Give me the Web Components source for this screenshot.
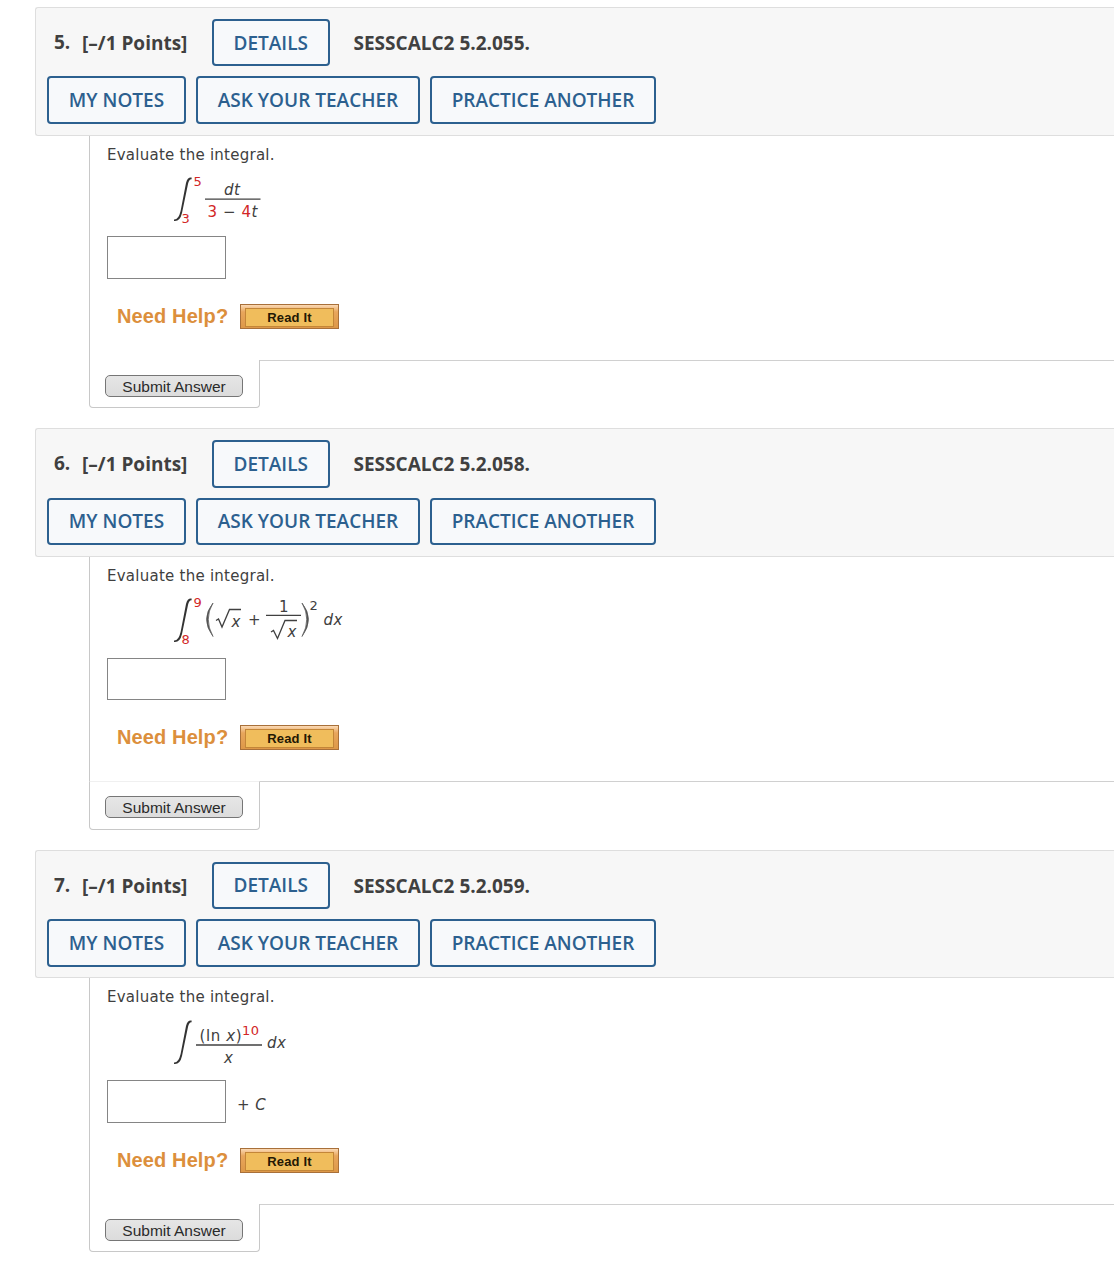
<!DOCTYPE html>
<html lang="en">
<head>
<meta charset="utf-8">
<title>Assignment</title>
<style>
    html, body {
        margin: 0;
        background: #fff;
    }
    body {
        height: 1278px;
        overflow: hidden;
        font-family: "DejaVu Sans", Verdana, sans-serif;
        color: #404040;
    }
    main {
        display: flex;
        flex-direction: column;
        padding: 7.1px 0 0 35px;
    }
    text {
        font-size: 15px;
        fill: #404040;
    }
    text.sm { font-size: 13px; }
    .i { font-style: italic; }
    .red { fill: #d22626; }
    .line {
        fill: none;
        stroke: #404040;
        stroke-width: 1.3;
    }
    svg { display: block; }
</style>
</head>
<body>
<main>
    <question-block number="5" code="SESSCALC2 5.2.055.">
        <svg slot="formula" width="200" height="56" viewBox="0 0 200 56">
            <path fill="#333" d="M26.6 7.6 Q22.5 7 21 13 L15.6 41 Q13.5 50 9 49.6 L9 51 Q15 51.8 17 43 L23 14 Q24 9 26.6 9.2Z"/>
            <text class="sm red" x="28.5" y="16">5</text>
            <text class="sm red" x="16.5" y="53">3</text>
            <text class="i" x="59" y="25" textLength="16">dt</text>
            <path class="line" d="M40 29.2H95.5"/>
            <text x="42.5" y="47" textLength="50" xml:space="preserve"><tspan class="red">3</tspan> − <tspan class="red">4</tspan><tspan class="i">t</tspan></text>
        </svg>
    </question-block>
    <question-block number="6" code="SESSCALC2 5.2.058." class="second">
        <svg slot="formula" width="200" height="56" viewBox="0 0 200 56">
            <path fill="#333" d="M26.6 7.6 Q22.5 7 21 13 L15.6 41 Q13.5 50 9 49.6 L9 51 Q15 51.8 17 43 L23 14 Q24 9 26.6 9.2Z"/>
            <text class="sm red" x="28.5" y="15.5">9</text>
            <text class="sm red" x="16.5" y="52.5">8</text>
            <path fill="#555" d="M48 12 Q35 28 48 45.5 Q38.5 28 48 12Z" stroke="#555" stroke-width=".7"/>
            <path class="line" d="M51 29.5 L53.5 28 L57 36 L64.5 18.5 H76"/>
            <text class="i" x="66.5" y="36">x</text>
            <text x="83" y="34">+</text>
            <path class="line" d="M101 24.3 H136"/>
            <text x="114" y="21">1</text>
            <path class="line" d="M106 41 L108.5 39.5 L112.5 47.5 L120 29.5 H132"/>
            <text class="i" x="122.5" y="46">x</text>
            <path fill="#555" d="M137 12 Q150 28 137 45.5 Q146.5 28 137 12Z" stroke="#555" stroke-width=".7"/>
            <text class="sm" x="144.5" y="18.5">2</text>
            <text class="i" x="158.5" y="33.5" textLength="19">dx</text>
        </svg>
    </question-block>
    <question-block number="7" code="SESSCALC2 5.2.059." class="third">
        <svg slot="formula" width="200" height="56" viewBox="0 0 200 56">
            <path fill="#333" d="M26.6 7.6 Q22.5 7 21 13 L15.6 41 Q13.5 50 9 49.6 L9 51 Q15 51.8 17 43 L23 14 Q24 9 26.6 9.2Z"/>
            <text x="34.5" y="28" textLength="42">(ln <tspan class="i">x</tspan>)</text>
            <text class="sm red" x="77" y="22" textLength="17">10</text>
            <path class="line" d="M31 32 H97"/>
            <text class="i" x="59" y="50">x</text>
            <text class="i" x="102" y="35" textLength="19">dx</text>
        </svg>
        <span slot="after">+ <i>C</i></span>
    </question-block>
</main>

<script>
class OutlineButton extends HTMLElement {
    constructor() {
        super();
        this.attachShadow({ mode: 'open' }).innerHTML = `
            <style>
                :host { display: block; }
                button {
                    box-sizing: border-box;
                    display: block;
                    width: 100%;
                    height: 47.5px;
                    padding: 0;
                    border: 2px solid #2c608f;
                    border-radius: 4px;
                    background: #f7f9fb;
                    color: #2c608f;
                    font: 600 19px/42px "Open Sans", sans-serif;
                    white-space: nowrap;
                }
            </style>
            <button><slot></slot></button>
        `;
    }
}

class QuestionHeader extends HTMLElement {
    constructor() {
        super();
        this.attachShadow({ mode: 'open' }).innerHTML = `
            <style>
                :host {
                    display: flex;
                    flex-direction: column;
                    box-sizing: border-box;
                    height: 128.5px;
                    padding: 10.7px 0 0 11px;
                    gap: 10px;
                    border: 1px solid #dedede;
                    border-right: 0;
                    border-radius: 3px 0 0 3px;
                    background: #f7f7f7;
                    font: bold 19px/48.5px "Open Sans", sans-serif;
                    color: #404040;
                }
                .row { display: flex; height: 47.5px; }
                .actions { gap: 10px; }
                .num { width: 28px; padding-left: 7px; line-height: 47px; }
                .points { width: 130px; }
                .details { width: 117.5px; margin-right: 24px; }
                .notes { width: 139px; }
                .teacher { width: 224px; }
                .practice { width: 226px; }
            </style>
            <div class="row">
                <span class="num"><slot name="number"></slot></span>
                <span class="points">[–/1 Points]</span>
                <outline-button class="details">DETAILS</outline-button>
                <span class="code"><slot name="code"></slot></span>
            </div>
            <div class="row actions">
                <outline-button class="notes">MY NOTES</outline-button>
                <outline-button class="teacher">ASK YOUR TEACHER</outline-button>
                <outline-button class="practice">PRACTICE ANOTHER</outline-button>
            </div>
        `;
    }
}

class NeedHelp extends HTMLElement {
    constructor() {
        super();
        this.attachShadow({ mode: 'open' }).innerHTML = `
            <style>
                :host {
                    display: flex;
                    align-items: center;
                    height: 25px;
                    font-family: "Liberation Sans", Arial, sans-serif;
                }
                b {
                    width: 123px;
                    color: #dc8f3c;
                    font-size: 20px;
                    line-height: 25px;
                    letter-spacing: 0.12px;
                }
                button {
                    box-sizing: border-box;
                    width: 99px;
                    height: 25px;
                    padding: 3px 4px;
                    border: 1px solid #a8703a;
                    background: linear-gradient(#fbd9b4, #e8a65c 30%, #dd9848);
                    font: bold 13px/17px "Liberation Sans", Arial, sans-serif;
                    letter-spacing: 0.15px;
                    color: #241804;
                }
                span {
                    display: block;
                    border: 1px solid #c48638;
                    background: #f0bd5c;
                }
            </style>
            <b>Need Help?</b>
            <button><span>Read It</span></button>
        `;
    }
}

class SubmitTab extends HTMLElement {
    constructor() {
        super();
        this.attachShadow({ mode: 'open' }).innerHTML = `
            <style>
                :host { display: flex; height: 48.5px; }
                .tab {
                    box-sizing: border-box;
                    width: 171px;
                    padding: var(--tab-pad, 15.5px) 0 0 15px;
                    border: 1px solid #c8c8c8;
                    border-top: var(--tab-line, 0);
                    border-radius: 0 0 4px 4px;
                }
                .rule { flex: 1; border-top: 1px solid #d0d0d0; }
                button {
                    box-sizing: border-box;
                    display: block;
                    width: 138px;
                    height: 21.5px;
                    padding: 0;
                    border: 1px solid #767676;
                    border-radius: 5px;
                    background: linear-gradient(#e6e6e6, #dcdcdc);
                    font: 15.5px/19px "Liberation Sans", Arial, sans-serif;
                    color: #2a2a2a;
                }
            </style>
            <div class="tab"><button>Submit Answer</button></div>
            <div class="rule"></div>
        `;
    }
}

class QuestionBlock extends HTMLElement {
    constructor() {
        super();
        this.attachShadow({ mode: 'open' }).innerHTML = `
            <style>
                :host { display: block; height: 421.4px; }
                :host(.second) {
                    --tab-line: 1px solid #f0f0f0;
                    --tab-pad: 14px;
                }
                :host(.third) { --formula-height: 57px; }
                .body {
                    margin-left: 54px;
                    padding: 8px 0 0 17px;
                    border-left: 1px solid #c8c8c8;
                    box-sizing: border-box;
                    height: calc(168.4px + var(--formula-height, 56px));
                }
                p {
                    margin: 0;
                    height: 26.5px;
                    font-size: 15px;
                    line-height: 22px;
                    letter-spacing: 0.25px;
                }
                .formula {
                    height: var(--formula-height, 56px);
                    padding-left: 58px;
                }
                .answer {
                    display: flex;
                    height: 42.5px;
                    margin-top: 10.2px;
                }
                input {
                    box-sizing: border-box;
                    width: 119px;
                    height: 42.5px;
                    border: 1px solid #858585;
                    border-radius: 0;
                    background: #fff;
                }
                .after {
                    padding-left: 11px;
                    font-size: 15px;
                    line-height: 50px;
                    word-spacing: 1px;
                }
                need-help { margin: 25.3px 0 0 10px; }
                submit-tab { margin-left: 54px; }
            </style>
            <question-header>
                <span slot="number">${this.getAttribute('number')}.</span>
                <span slot="code">${this.getAttribute('code')}</span>
            </question-header>
            <div class="body">
                <p>Evaluate the integral.</p>
                <div class="formula"><slot name="formula"></slot></div>
                <div class="answer">
                    <input type="text">
                    <span class="after"><slot name="after"></slot></span>
                </div>
                <need-help></need-help>
            </div>
            <submit-tab></submit-tab>
        `;
    }
}

customElements.define('outline-button', OutlineButton);
customElements.define('question-header', QuestionHeader);
customElements.define('need-help', NeedHelp);
customElements.define('submit-tab', SubmitTab);
customElements.define('question-block', QuestionBlock);
</script>
</body>
</html>
